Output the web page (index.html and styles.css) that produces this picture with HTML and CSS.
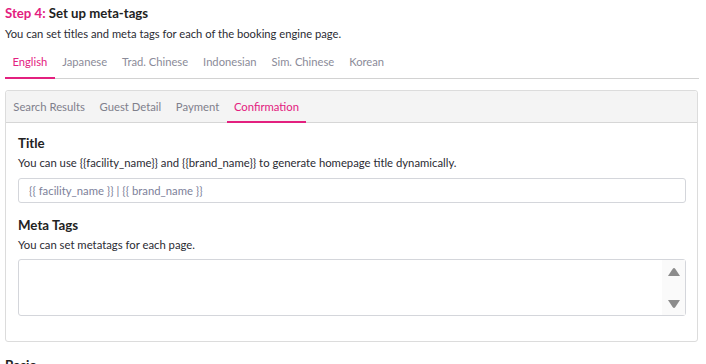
FILE: index.html
```html
<!DOCTYPE html>
<html>
<head>
<meta charset="utf-8">
<link rel="stylesheet" href="styles.css">
</head>
<body>
<div class="page">
  <h2 class="step"><span class="step-num">Step 4:</span> Set up meta-tags</h2>
  <p class="lead">You can set titles and meta tags for each of the booking engine page.</p>
  <nav class="lang-tabs">
    <a class="lang-tab active">English</a>
    <a class="lang-tab">Japanese</a>
    <a class="lang-tab">Trad. Chinese</a>
    <a class="lang-tab">Indonesian</a>
    <a class="lang-tab">Sim. Chinese</a>
    <a class="lang-tab">Korean</a>
  </nav>
  <section class="panel">
    <nav class="page-tabs">
      <a class="page-tab">Search Results</a>
      <a class="page-tab">Guest Detail</a>
      <a class="page-tab">Payment</a>
      <a class="page-tab active">Confirmation</a>
    </nav>
    <div class="panel-body">
      <h3 class="field-title">Title</h3>
      <p class="field-desc">You can use {{facility_name}} and {{brand_name}} to generate homepage title dynamically.</p>
      <input class="text-input" type="text" placeholder="{{ facility_name }} | {{ brand_name }}">
      <h3 class="field-title meta">Meta Tags</h3>
      <p class="field-desc">You can set metatags for each page.</p>
      <div class="textarea">
        <div class="scroll">
          <svg width="14" height="10" viewBox="0 0 14 10"><path d="M1 9 L5.6 2 Q7 0 8.4 2 L13 9 Z" fill="#8c8c8c"/></svg>
          <svg width="14" height="10" viewBox="0 0 14 10"><path d="M1 1 L5.6 8 Q7 10 8.4 8 L13 1 Z" fill="#8c8c8c"/></svg>
        </div>
      </div>
    </div>
  </section>
  <h2 class="next">Basic</h2>
</div>
</body>
</html>
```
FILE: styles.css
```css
* { box-sizing: border-box; }
html, body { margin: 0; padding: 0; background: #fff; }
body {
  font-family: Lato, "Noto Sans", sans-serif;
  color: #2b2b33;
  font-size: 11.2px;
}
.page { padding: 4px 8px 0 5px; }
.step {
  margin: 0;
  font-size: 13.2px;
  font-weight: 700;
  line-height: 18px;
  color: #222;
}
.step-num { color: #e3207f; }
.lead {
  margin: 5px 0 0;
  font-size: 11.2px;
  line-height: 14px;
  color: #2b2b33;
}
.lang-tabs {
  display: flex;
  margin-top: 6px;
  border-bottom: 1px solid #d2d2d2;
  margin-right: -1px;
}
.lang-tab {
  padding: 7px 7.5px 8px;
  font-size: 11.2px;
  line-height: 15px;
  color: #8b8b99;
  border-bottom: 2px solid transparent;
  margin-bottom: -1px;
}
.lang-tab.active { color: #e3207f; border-bottom-color: #e3207f; }
.panel {
  margin-top: 11px;
  border: 1px solid #dcdcdc;
  border-radius: 3px;
}
.page-tabs {
  display: flex;
  background: #f4f4f4;
  border-bottom: 1px solid #d6d6d6;
  padding-left: 0;
  border-radius: 3px 3px 0 0;
}
.page-tab {
  padding: 8px 7.3px 7px;
  font-size: 11.3px;
  line-height: 15px;
  color: #80808c;
  border-bottom: 2px solid transparent;
  margin-bottom: -1px;
}
.page-tab.active { color: #e3207f; border-bottom-color: #e3207f; }
.panel-body { padding: 12px 11px 25px 12px; }
.field-title {
  margin: 0;
  font-size: 13.3px;
  font-weight: 700;
  line-height: 16px;
  color: #222;
}
.field-title.meta { margin-top: 14px; }
.field-desc {
  margin: 5px 0 0;
  font-size: 11.3px;
  line-height: 14px;
  color: #2b2b33;
}
.text-input {
  display: block;
  width: 100%;
  height: 25px;
  margin-top: 8px;
  border: 1px solid #d4d6db;
  border-radius: 3px;
  padding: 0 10px;
  font-family: Lato, "Noto Sans", sans-serif;
  font-size: 11.3px;
  outline: none;
}
.text-input::placeholder { color: #7d819a; }
.textarea {
  display: flex;
  justify-content: flex-end;
  height: 57px;
  margin-top: 7px;
  border: 1px solid #d4d6db;
  border-radius: 3px;
}
.scroll {
  width: 23px;
  background: #fafafa;
  display: flex;
  flex-direction: column;
  justify-content: space-between;
  align-items: center;
  padding: 7px 0 6px;
}
.next {
  margin: 14px 0 0;
  font-size: 13.2px;
  font-weight: 700;
  line-height: 18px;
  color: #222;
}
```
